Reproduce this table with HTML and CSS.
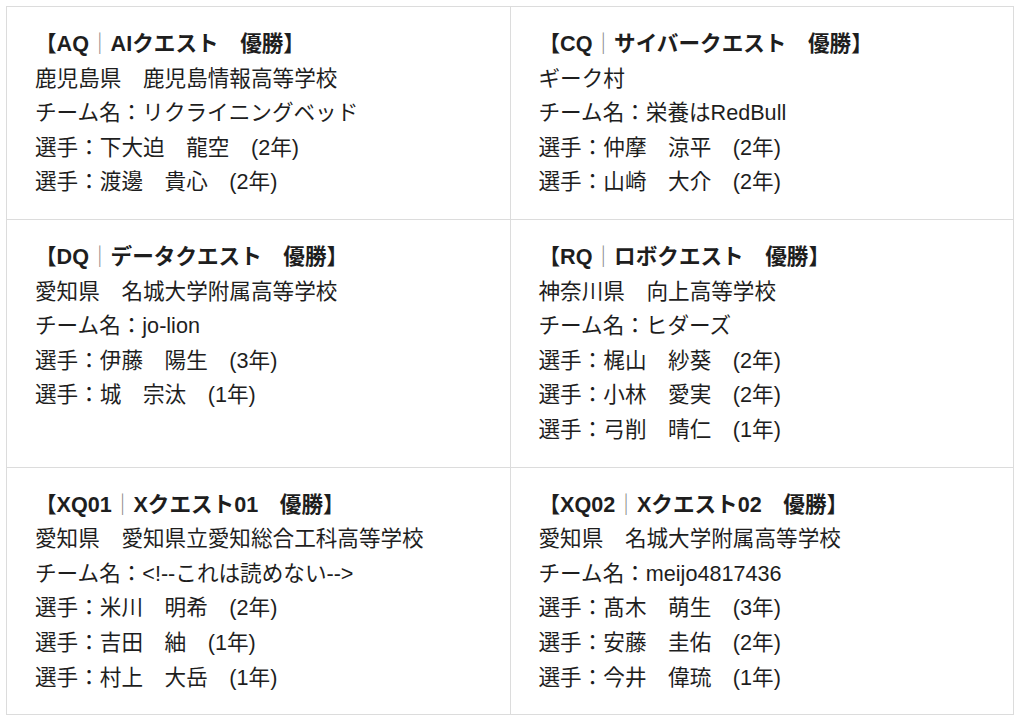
FILE: index.html
```html
<!DOCTYPE html>
<html lang="ja">
<head>
<meta charset="utf-8">
<title>優勝チーム</title>
<link rel="stylesheet" href="styles.css">
</head>
<body>
<div class="results">
  <div class="cell">
    <div class="title">【AQ<span class="bar">｜</span>AIクエスト　優勝】</div>
    <div class="line">鹿児島県　鹿児島情報高等学校</div>
    <div class="line">チーム名：リクライニングベッド</div>
    <div class="line">選手：下大迫　龍空　(2年)</div>
    <div class="line">選手：渡邊　貴心　(2年)</div>
  </div>
  <div class="cell">
    <div class="title">【CQ<span class="bar">｜</span>サイバークエスト　優勝】</div>
    <div class="line">ギーク村</div>
    <div class="line">チーム名：栄養はRedBull</div>
    <div class="line">選手：仲摩　涼平　(2年)</div>
    <div class="line">選手：山崎　大介　(2年)</div>
  </div>
  <div class="cell">
    <div class="title">【DQ<span class="bar">｜</span>データクエスト　優勝】</div>
    <div class="line">愛知県　名城大学附属高等学校</div>
    <div class="line">チーム名：jo-lion</div>
    <div class="line">選手：伊藤　陽生　(3年)</div>
    <div class="line">選手：城　宗汰　(1年)</div>
  </div>
  <div class="cell">
    <div class="title">【RQ<span class="bar">｜</span>ロボクエスト　優勝】</div>
    <div class="line">神奈川県　向上高等学校</div>
    <div class="line">チーム名：ヒダーズ</div>
    <div class="line">選手：梶山　紗葵　(2年)</div>
    <div class="line">選手：小林　愛実　(2年)</div>
    <div class="line">選手：弓削　晴仁　(1年)</div>
  </div>
  <div class="cell">
    <div class="title">【XQ01<span class="bar">｜</span>Xクエスト01　優勝】</div>
    <div class="line">愛知県　愛知県立愛知総合工科高等学校</div>
    <div class="line">チーム名：&lt;!--これは読めない--&gt;</div>
    <div class="line">選手：米川　明希　(2年)</div>
    <div class="line">選手：吉田　紬　(1年)</div>
    <div class="line">選手：村上　大岳　(1年)</div>
  </div>
  <div class="cell">
    <div class="title">【XQ02<span class="bar">｜</span>Xクエスト02　優勝】</div>
    <div class="line">愛知県　名城大学附属高等学校</div>
    <div class="line">チーム名：meijo4817436</div>
    <div class="line">選手：髙木　萌生　(3年)</div>
    <div class="line">選手：安藤　圭佑　(2年)</div>
    <div class="line">選手：今井　偉琉　(1年)</div>
  </div>
</div>
</body>
</html>
```

FILE: styles.css
```css
html, body {
  margin: 0;
  padding: 0;
  background: #ffffff;
}

body {
  font-family: "Liberation Sans", "Noto Sans CJK JP", sans-serif;
  color: #1e1e1e;
  font-size: 21.6px;
  line-height: 34.6px;
}

.results {
  margin: 6px 10px 0 6px;
  display: grid;
  grid-template-columns: 1fr 1fr;
  border-top: 1px solid #dcdcdc;
  border-left: 1px solid #dcdcdc;
}

.cell {
  padding: 20px 16px 19px 28px;
  border-right: 1px solid #dcdcdc;
  border-bottom: 1px solid #dcdcdc;
}

.title {
  font-weight: bold;
}

.bar {
  font-weight: normal;
  color: #888888;
}

.line {
  white-space: nowrap;
}
```
